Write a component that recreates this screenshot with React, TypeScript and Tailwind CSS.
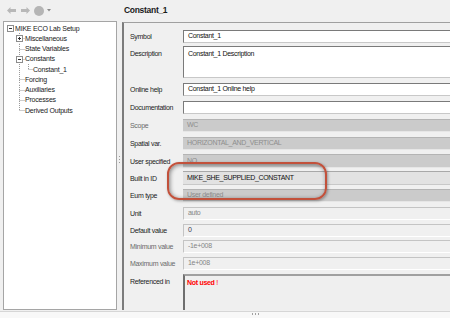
import React from 'react';

const DOT = { stroke: '#9a9a9a', strokeWidth: 1, strokeDasharray: '1 1', fill: 'none' } as const;
const H = 10.25;
const CY = 5.5;

function Box({ cx, plus }: { cx: number; plus?: boolean }) {
  return (
    <g>
      <rect x={cx - 3} y={CY - 3} width={6} height={6} fill="#fff" stroke="#8c8c8c" strokeWidth={1} />
      <line x1={cx - 1.5} y1={CY} x2={cx + 1.5} y2={CY} stroke="#333" strokeWidth={1} />
      {plus && <line x1={cx} y1={CY - 1.5} x2={cx} y2={CY + 1.5} stroke="#333" strokeWidth={1} />}
    </g>
  );
}

function TreeRow({ label, kind }: { label: string; kind: 'root' | 'plus' | 'minus' | 'tee' | 'end' | 'child' }) {
  let w = 21;
  let svg: React.ReactNode = null;
  const vx = 15.5;
  if (kind === 'root') {
    w = 11;
    svg = <Box cx={6.5} />;
  } else if (kind === 'plus' || kind === 'minus') {
    svg = (
      <>
        <line x1={vx} y1={0} x2={vx} y2={H} {...DOT} />
        <line x1={vx} y1={CY} x2={21} y2={CY} {...DOT} />
        <Box cx={vx} plus={kind === 'plus'} />
      </>
    );
  } else if (kind === 'tee') {
    svg = (
      <>
        <line x1={vx} y1={0} x2={vx} y2={H} {...DOT} />
        <line x1={vx} y1={CY} x2={21} y2={CY} {...DOT} />
      </>
    );
  } else if (kind === 'end') {
    svg = (
      <>
        <line x1={vx} y1={0} x2={vx} y2={CY} {...DOT} />
        <line x1={vx} y1={CY} x2={21} y2={CY} {...DOT} />
      </>
    );
  } else {
    w = 29;
    svg = (
      <>
        <line x1={vx} y1={0} x2={vx} y2={H} {...DOT} />
        <line x1={24.5} y1={0} x2={24.5} y2={CY} {...DOT} />
        <line x1={24.5} y1={CY} x2={29} y2={CY} {...DOT} />
      </>
    );
  }
  return (
    <div className="flex items-center h-[10.25px]">
      <svg width={w} height={H} viewBox={`0 0 ${w} ${H}`} className="shrink-0">
        {svg}
      </svg>
      <span className="whitespace-nowrap text-[#1a1a1a] tracking-[-0.2px] leading-none">{label}</span>
    </div>
  );
}

function Label({ children, gray, top }: { children: React.ReactNode; gray?: boolean; top?: boolean }) {
  return (
    <div
      className={
        'w-[59px] shrink-0 pl-[6px] whitespace-nowrap tracking-[-0.3px] leading-none ' +
        (gray ? 'text-[#6a6a6a] ' : 'text-[#1c1c1c] ') +
        (top ? 'pt-[4px]' : 'self-center')
      }
    >
      {children}
    </div>
  );
}

export default function App() {
  return (
    <div className="w-[450px] h-[318px] bg-[#f0f0f0] overflow-hidden relative flex flex-col font-['Liberation_Sans',Arial,sans-serif] text-[7px]">
      <div className="flex h-[311px]">
        {/* left column */}
        <div className="w-[117px] shrink-0 flex flex-col">
          <div className="h-[21px] flex items-center pl-[7px] shrink-0">
            <svg width="9" height="7" viewBox="0 0 9 7">
              <path d="M0 3.5 L3.5 0 V2 H9 V5 H3.5 V7 Z" fill="#b8b8b8" />
            </svg>
            <svg width="9" height="7" viewBox="0 0 9 7" className="ml-[5px]">
              <path d="M9 3.5 L5.5 0 V2 H0 V5 H5.5 V7 Z" fill="#b8b8b8" />
            </svg>
            <svg width="10" height="10" viewBox="0 0 10 10" className="ml-[4px]">
              <circle cx="5" cy="5" r="5" fill="#b5b5b5" />
            </svg>
            <svg width="4" height="3" viewBox="0 0 4 3" className="ml-[3px]">
              <path d="M0 0 H4 L2 2.5 Z" fill="#8a8a8a" />
            </svg>
          </div>
          <div className="ml-[3px] w-[114px] flex-1 mb-[1px] bg-white border border-[#a5a5a5] pt-[1px]">
            <TreeRow kind="root" label="MIKE ECO Lab Setup" />
            <TreeRow kind="plus" label="Miscellaneous" />
            <TreeRow kind="tee" label="State Variables" />
            <TreeRow kind="minus" label="Constants" />
            <TreeRow kind="child" label="Constant_1" />
            <TreeRow kind="tee" label="Forcing" />
            <TreeRow kind="tee" label="Auxiliaries" />
            <TreeRow kind="tee" label="Processes" />
            <TreeRow kind="end" label="Derived Outputs" />
          </div>
        </div>
        {/* splitter */}
        <div className="w-[5px] shrink-0 flex flex-col items-center justify-center gap-[2px] pt-[8px]">
          <div className="w-[1px] h-[1px] bg-[#9a9a9a]" />
          <div className="w-[1px] h-[1px] bg-[#9a9a9a]" />
          <div className="w-[1px] h-[1px] bg-[#9a9a9a]" />
        </div>
        {/* right column */}
        <div className="flex-1 min-w-0 flex flex-col">
          <div className="h-[22px] shrink-0 flex items-center pl-[2px] pb-[1px] text-[8.5px] font-bold text-[#1a1a1a] tracking-[-0.3px]">
            Constant_1
          </div>
          <div className="flex-1 flex flex-col border-t border-t-[#a0a0a0] border-l-2 border-l-[#7c7c7c] mb-[1px] pt-[7px]">
            {/* Symbol */}
            <div className="flex h-[13px]">
              <Label>Symbol</Label>
              <div className="flex-1 bg-white border-t border-l border-t-[#7a7a7a] border-l-[#7a7a7a] border-b border-b-[#c8c8c8] flex items-center pl-[4px] text-[#111] tracking-[-0.3px]">
                Constant_1
              </div>
            </div>
            {/* Description */}
            <div className="flex h-[32px] mt-[3px]">
              <Label top>Description</Label>
              <div className="flex-1 bg-white border-t border-l border-t-[#7a7a7a] border-l-[#7a7a7a] border-b border-b-[#c8c8c8] pl-[4px] pt-[3px] text-[#111] tracking-[-0.3px] leading-none">
                Constant_1 Description
              </div>
            </div>
            {/* Online help */}
            <div className="flex h-[13px] mt-[5px]">
              <Label>Online help</Label>
              <div className="flex-1 bg-white border-t border-l border-t-[#7a7a7a] border-l-[#7a7a7a] border-b border-b-[#c8c8c8] flex items-center pl-[4px] text-[#111] tracking-[-0.3px]">
                Constant_1 Online help
              </div>
            </div>
            {/* Documentation */}
            <div className="flex h-[13px] mt-[5px]">
              <Label>Documentation</Label>
              <div className="flex-1 bg-white border-t border-l border-t-[#7a7a7a] border-l-[#7a7a7a] border-b border-b-[#c8c8c8]" />
            </div>
            {/* Scope */}
            <div className="flex h-[13px] mt-[5px]">
              <Label gray>Scope</Label>
              <div className="flex-1 bg-[#cbcbcb] border-t border-t-[#b4b4b4] border-b border-b-[#e6e6e6] flex items-center pl-[4px] text-[#8e8e8e] tracking-[-0.3px]">
                WC
              </div>
            </div>
            {/* Spatial */}
            <div className="flex h-[13px] mt-[5px]">
              <Label>Spatial var.</Label>
              <div className="flex-1 bg-[#cbcbcb] border-t border-t-[#b4b4b4] border-b border-b-[#e6e6e6] flex items-center pl-[4px] text-[#8e8e8e] tracking-[-0.3px]">
                HORIZONTAL_AND_VERTICAL
              </div>
            </div>
            {/* User specified */}
            <div className="flex h-[14px] mt-[4px]">
              <Label>User specified</Label>
              <div className="flex-1 bg-[#cbcbcb] border-t border-t-[#b4b4b4] border-b border-b-[#e6e6e6] flex items-center pl-[4px] text-[#8e8e8e] tracking-[-0.3px]">
                NO
              </div>
            </div>
            {/* Built in ID */}
            <div className="flex h-[14px] mt-[3px]">
              <Label>Built in ID</Label>
              <div className="flex-1 bg-[#e2e2e2] border-t border-t-[#a8a8a8] border-b border-b-[#c8c8c8] flex items-center pl-[4px] text-[#111] tracking-[-0.35px]">
                MIKE_SHE_SUPPLIED_CONSTANT
              </div>
            </div>
            {/* Eum type */}
            <div className="flex h-[13px] mt-[4px]">
              <Label>Eum type</Label>
              <div className="flex-1 bg-[#cbcbcb] border-t border-t-[#b4b4b4] border-b border-b-[#e6e6e6] flex items-center pl-[4px] text-[#8e8e8e] tracking-[-0.3px]">
                User defined
              </div>
            </div>
            {/* Unit */}
            <div className="flex h-[13px] mt-[5px]">
              <Label>Unit</Label>
              <div className="flex-1 bg-[#f0f0f0] border-t border-l border-t-[#c4c4c4] border-l-[#c4c4c4] border-b border-b-[#ffffff] flex items-center pl-[4px] text-[#858585] tracking-[-0.3px]">
                auto
              </div>
            </div>
            {/* Default */}
            <div className="flex h-[13px] mt-[4px]">
              <Label>Default value</Label>
              <div className="flex-1 bg-[#f0f0f0] border-t border-l border-t-[#c4c4c4] border-l-[#c4c4c4] border-b border-b-[#ffffff] flex items-center pl-[4px] text-[#3a3a50] tracking-[-0.3px]">
                0
              </div>
            </div>
            {/* Min */}
            <div className="flex h-[13px] mt-[3px]">
              <Label gray>Minimum value</Label>
              <div className="flex-1 bg-[#f0f0f0] border-t border-l border-t-[#c4c4c4] border-l-[#c4c4c4] border-b border-b-[#ffffff] flex items-center pl-[4px] text-[#858585] tracking-[-0.3px]">
                -1e+008
              </div>
            </div>
            {/* Max */}
            <div className="flex h-[13px] mt-[4px]">
              <Label gray>Maximum value</Label>
              <div className="flex-1 bg-[#f0f0f0] border-t border-l border-t-[#c4c4c4] border-l-[#c4c4c4] border-b border-b-[#ffffff] flex items-center pl-[4px] text-[#858585] tracking-[-0.3px]">
                1e+008
              </div>
            </div>
            {/* Referenced */}
            <div className="flex flex-1 mt-[4px]">
              <Label top>Referenced in</Label>
              <div className="flex-1 bg-[#efefef] border-t-2 border-l-2 border-t-[#a0a0a0] border-l-[#6e6e6e] pl-[2px] pt-[3px] leading-none tracking-[-0.3px] text-[#ff0000]">
                <span className="font-bold">Not used</span> !
              </div>
            </div>
          </div>
        </div>
      </div>
      {/* bottom bar */}
      <div className="flex-1 bg-[#f8f8f8] border-t border-t-[#d6d6d6] flex justify-center pl-[60px] pt-[1px] gap-[2px]">
        <div className="w-[1px] h-[2px] bg-[#a0a0a0]" />
        <div className="w-[1px] h-[2px] bg-[#a0a0a0]" />
        <div className="w-[1px] h-[2px] bg-[#a0a0a0]" />
      </div>
      {/* highlight annotation */}
      <div className="absolute left-[167px] top-[162px] w-[160px] h-[38px] rounded-[12px] border-2 border-[#c2513b] shadow-[inset_1px_1px_4px_rgba(0,0,0,0.45),1px_1px_3px_rgba(0,0,0,0.35)]" />
    </div>
  );
}
